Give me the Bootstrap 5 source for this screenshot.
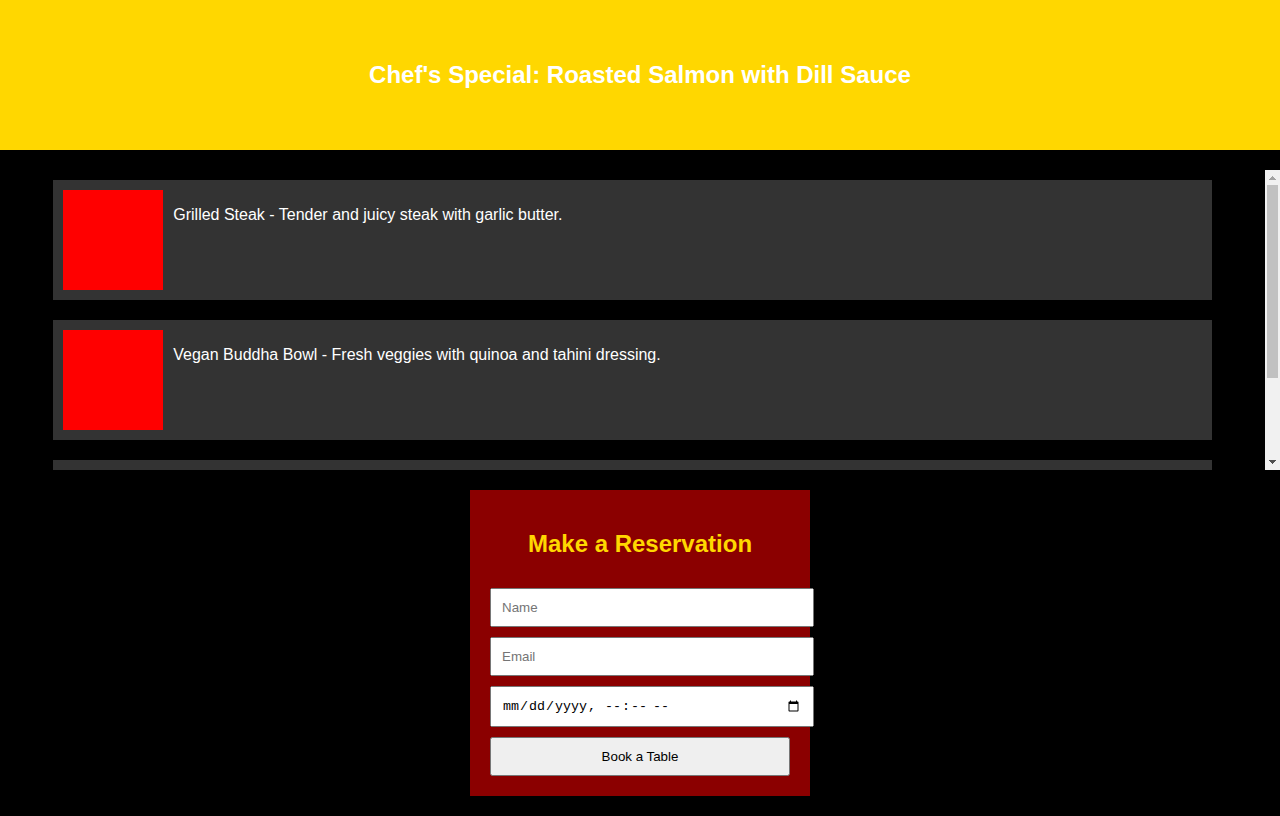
<!DOCTYPE html>
<html lang="en">
<head>
<meta charset="utf-8">
<meta name="viewport" content="width=device-width, initial-scale=1">
<title>Restaurant</title>
<link href="https://cdn.jsdelivr.net/npm/bootstrap@5.3.0/dist/css/bootstrap.min.css" rel="stylesheet">
<style>
  body { font-family: "Liberation Sans", Arial, sans-serif; background: #000; color: #fff; line-height: 18px; }
  h2 { font-size: 24px; font-weight: 700; line-height: 28px; }
  .special { background: gold; height: 150px; }
  .menu-area { height: 300px; margin: 20px 0; }
  .menu-scroll { overflow-y: auto; scrollbar-width: none; }
  .menu-scroll::-webkit-scrollbar { display: none; }
  .dish-list { padding: 10px 0; gap: 20px; }
  .dish { box-sizing: content-box; width: 90%; padding: 10px; background: #333; }
  .dish-photo { width: 100px; height: 100px; background: red; }
  .dish p { margin: 16px 10px; }
  .scroll-track { width: 15px; background: #f1f1f1; }
  .scroll-thumb { height: 193px; margin: 0 2px; background: #c1c1c1; }
  .reservation { width: 340px; padding: 20px; background: #8b0000; }
  .reservation h2 { color: gold; margin: 20px 0 30px; }
  .reservation input, .reservation button { font: revert; padding: 10px; border-radius: revert; }
  .reservation input { box-sizing: content-box; width: 100%; margin-bottom: 10px; }
  .reservation input[type="datetime-local"] { font-family: "Liberation Mono", monospace; }
  ::-webkit-datetime-edit-fields-wrapper, ::-webkit-datetime-edit-text, ::-webkit-datetime-edit-minute,
  ::-webkit-datetime-edit-hour-field, ::-webkit-datetime-edit-day-field,
  ::-webkit-datetime-edit-month-field, ::-webkit-datetime-edit-year-field { padding: revert; }
</style>
</head>
<body>
<header class="special d-flex align-items-center justify-content-center text-center">
  <h2 class="m-0">Chef's Special: Roasted Salmon with Dill Sauce</h2>
</header>
<main>
  <section class="menu-area d-flex" aria-label="Menu">
    <div class="menu-scroll flex-grow-1" tabindex="0">
      <div class="dish-list d-flex flex-column align-items-center">
        <article class="dish d-flex"><div class="dish-photo flex-shrink-0"></div><p>Grilled Steak - Tender and juicy steak with garlic butter.</p></article>
        <article class="dish d-flex"><div class="dish-photo flex-shrink-0"></div><p>Vegan Buddha Bowl - Fresh veggies with quinoa and tahini dressing.</p></article>
        <article class="dish d-flex"><div class="dish-photo flex-shrink-0"></div></article>
      </div>
    </div>
    <div class="scroll-track d-flex flex-column flex-shrink-0" aria-hidden="true">
      <svg width="15" height="15" shape-rendering="crispEdges"><path fill="#a3a3a3" d="M7 6h1v1h1v1h1v1h1v1H4V9h1V8h1V7h1z"/></svg>
      <div class="scroll-thumb"></div>
      <svg class="mt-auto" width="15" height="15" shape-rendering="crispEdges"><path fill="#505050" d="M4 5h7v1h-1v1H9v1H8v1H7V8H6V7H5V6H4z"/></svg>
    </div>
  </section>
  <form class="reservation mx-auto d-flex flex-column">
    <h2 class="text-center">Make a Reservation</h2>
    <input type="text" placeholder="Name" aria-label="Name">
    <input type="email" placeholder="Email" aria-label="Email">
    <input type="datetime-local" aria-label="Date and time">
    <button type="submit" class="w-100">Book a Table</button>
  </form>
</main>
<script src="https://cdn.jsdelivr.net/npm/bootstrap@5.3.0/dist/js/bootstrap.bundle.min.js"></script>
</body>
</html>
